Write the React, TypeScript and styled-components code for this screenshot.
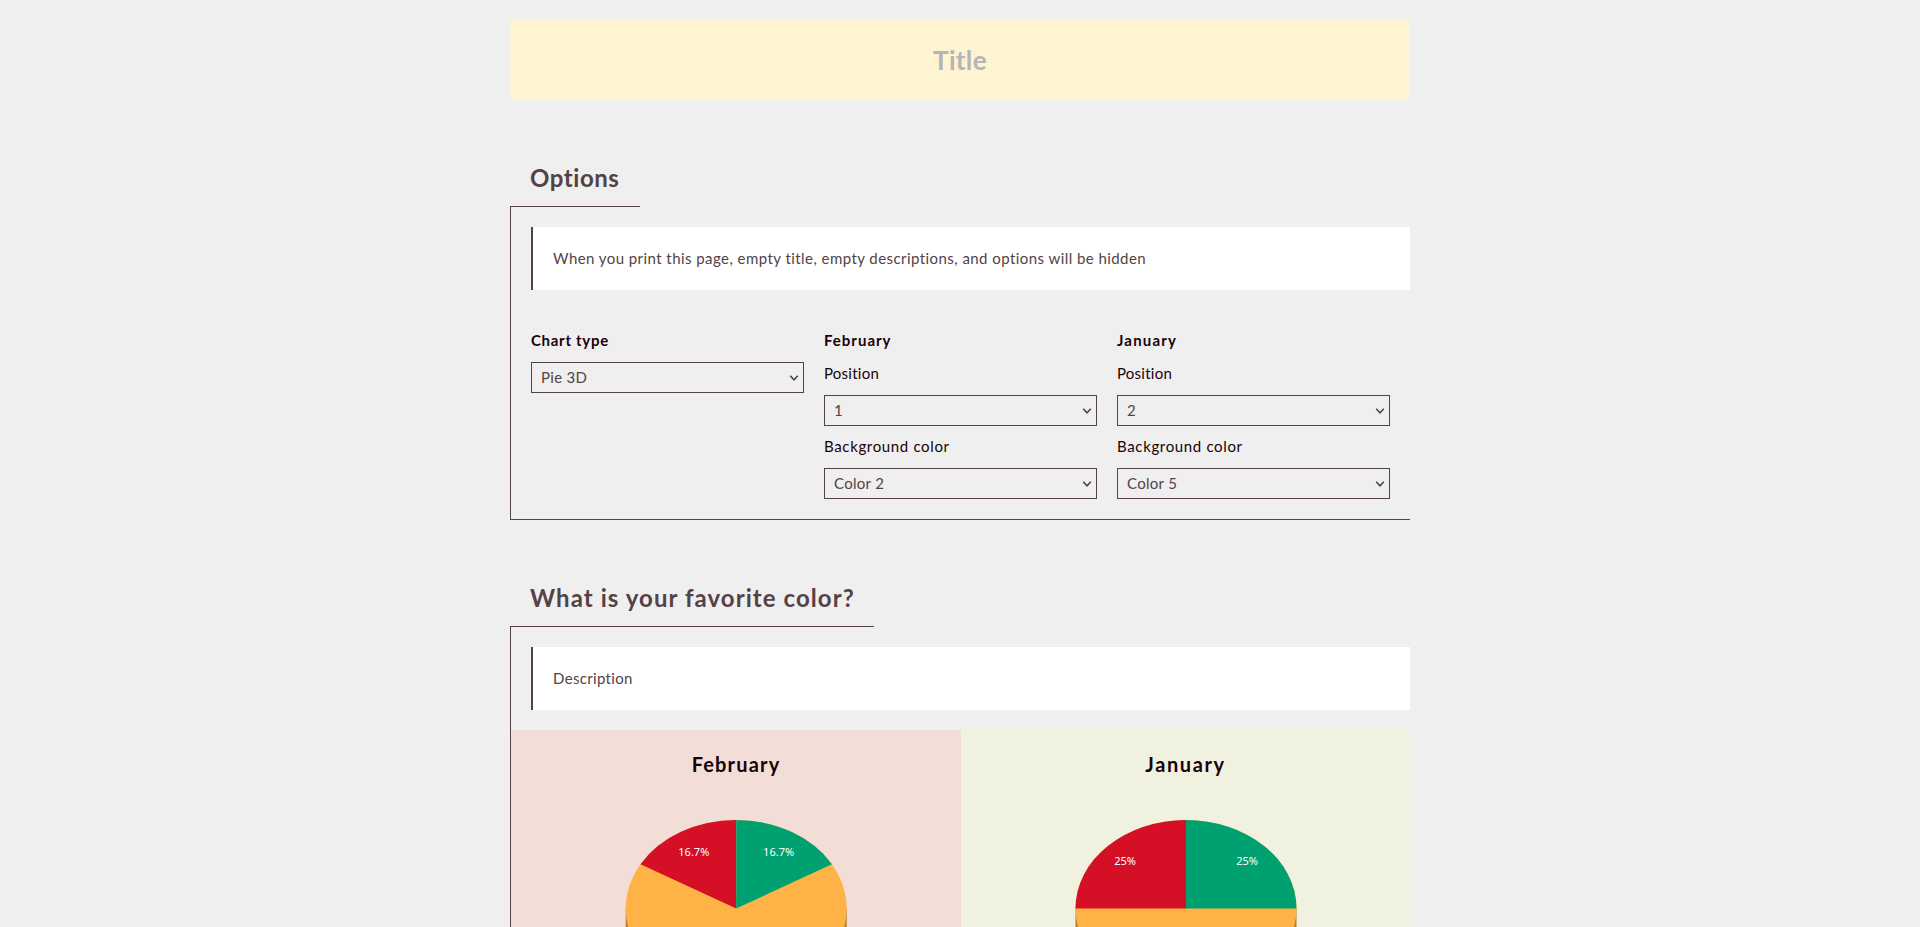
import React from 'react';
import styled, { createGlobalStyle } from 'styled-components';

const ink = '#544245';
const dark = '#190207';

const GlobalStyle = createGlobalStyle`
  * { box-sizing: border-box; }
  body {
    margin: 0;
    background: #efefef;
    color: ${dark};
    font: 15px/19px Lato, sans-serif;
  }
`;

const Page = styled.main`
  width: 900px;
  height: 100vh;
  margin: 0 auto;
  padding-top: 20px;
  overflow: hidden;
`;

const TitleInput = styled.input`
  display: block;
  width: 100%;
  height: 80px;
  padding: 0 20px;
  border: 0;
  background: #fff4d1;
  font: 700 26px/32px Lato, sans-serif;
  letter-spacing: 0.35px;
  text-align: center;
  &::placeholder { color: #b5b5b7; opacity: 1; }
`;

const Section = styled.section`
  display: flex;
  flex-direction: column;
  align-items: flex-start;
  margin-top: 58px;
`;

const Heading = styled.h2<{ $width: number; $track: number }>`
  width: ${(p) => p.$width}px;
  height: 49px;
  margin: 0;
  padding: 5px 0 0 20px;
  border-bottom: 1px solid ${ink};
  color: ${ink};
  font-size: 24px;
  line-height: 30px;
  letter-spacing: ${(p) => p.$track}px;
  white-space: nowrap;
`;

const Body = styled.div<{ $closed?: boolean }>`
  width: 100%;
  padding-top: 20px;
  border-left: 1px solid ${ink};
  border-bottom: ${(p) => (p.$closed ? `1px solid ${ink}` : '0')};
`;

const Note = styled.p<{ $track: number }>`
  height: 63px;
  margin: 0 0 0 20px;
  padding: 22px 20px 0;
  border-left: 2px solid ${ink};
  background: #fff;
  color: ${ink};
  letter-spacing: ${(p) => p.$track}px;
`;

const Controls = styled.div`
  display: grid;
  grid-template-columns: repeat(3, 273px);
  column-gap: 20px;
  padding: 41px 20px 20px;
`;

const Column = styled.div`
  display: flex;
  flex-direction: column;
`;

const GroupName = styled.strong<{ $track: number }>`
  letter-spacing: ${(p) => p.$track}px;
`;

const Field = styled.label<{ $top: number }>`
  display: flex;
  flex-direction: column;
  gap: 12px;
  margin-top: ${(p) => p.$top}px;
`;

const FieldName = styled.span<{ $track: number }>`
  letter-spacing: ${(p) => p.$track}px;
`;

const SelectBox = styled.span`
  display: grid;
  align-items: center;
  height: 31px;
  border: 1px solid ${ink};
  & > * { grid-area: 1 / 1; }
`;

const Select = styled.select`
  appearance: none;
  width: 100%;
  height: 29px;
  padding: 0 9px;
  border: 0;
  background: transparent;
  color: ${ink};
  font: 15px/19px Lato, sans-serif;
  letter-spacing: 0.3px;
`;

const Chevron = styled.svg`
  justify-self: end;
  margin-right: 4px;
  pointer-events: none;
`;

const Charts = styled.div`
  display: grid;
  grid-template-columns: 450px 449px;
  margin-top: 20px;
`;

const ChartPanel = styled.div<{ $bg: string }>`
  height: 400px;
  padding-top: 21px;
  background: ${(p) => p.$bg};
  text-align: center;
`;

const ChartTitle = styled.h3<{ $track: number }>`
  height: 27px;
  margin: 0;
  font-size: 20px;
  line-height: 26px;
  letter-spacing: ${(p) => p.$track}px;
`;

const Pie = styled.svg`
  display: block;
`;

const Percent = styled.text`
  fill: #fff;
  font: 11px 'Noto Sans', sans-serif;
  text-anchor: middle;
`;

function Dropdown({ value }: { value: string }) {
  return (
    <SelectBox>
      <Select defaultValue={value}>
        <option>{value}</option>
      </Select>
      <Chevron width="10" height="8" viewBox="0 0 10 8" fill="none" stroke={ink} strokeWidth="1.6">
        <path d="M1.2 1.7 5 5.8 8.8 1.7" />
      </Chevron>
    </SelectBox>
  );
}

const months = [
  { name: 'February', position: '1', color: 'Color 2', track: 1 },
  { name: 'January', position: '2', color: 'Color 5', track: 1.2 },
];

type PieProps = {
  cx: number;
  angle: number;
  label: string;
  offset: number;
  labelY: number;
};

const RX = 110.5;
const RY = 88.5;
const CY = 130.5;

/* Two equal slices meet at twelve o'clock; the third fills the rest. */
function Pie3D({ cx, angle, label, offset, labelY }: PieProps) {
  const rad = (angle * Math.PI) / 180;
  const dx = RX * Math.sin(rad);
  const y = CY - RY * Math.cos(rad);
  const top = CY - RY;
  return (
    <Pie width="449" height="320">
      <path
        d={`M${cx - RX} ${CY}v28a${RX} ${RY} 0 0 0 ${RX * 2} 0v-28z`}
        fill="#b37d32"
      />
      <ellipse cx={cx} cy={CY} rx={RX} ry={RY} fill="#ffb347" />
      <path d={`M${cx} ${CY}V${top}A${RX} ${RY} 0 0 0 ${cx - dx} ${y}z`} fill="#d40f26" />
      <path d={`M${cx} ${CY}V${top}A${RX} ${RY} 0 0 1 ${cx + dx} ${y}z`} fill="#00a170" />
      <Percent x={cx - offset} y={labelY}>{label}</Percent>
      <Percent x={cx + offset} y={labelY}>{label}</Percent>
    </Pie>
  );
}

export default function App() {
  return (
    <>
      <GlobalStyle />
      <Page>
        <TitleInput placeholder="Title" />

        <Section>
          <Heading $width={130} $track={0.55}>Options</Heading>
          <Body $closed>
            <Note $track={0.44}>
              When you print this page, empty title, empty descriptions, and options will be hidden
            </Note>
            <Controls>
              <Column>
                <GroupName $track={0.7}>Chart type</GroupName>
                <Field $top={12}>
                  <Dropdown value="Pie 3D" />
                </Field>
              </Column>
              {months.map((m) => (
                <Column key={m.name}>
                  <GroupName $track={m.track}>{m.name}</GroupName>
                  <Field $top={14}>
                    <FieldName $track={0.25}>Position</FieldName>
                    <Dropdown value={m.position} />
                  </Field>
                  <Field $top={11}>
                    <FieldName $track={0.65}>Background color</FieldName>
                    <Dropdown value={m.color} />
                  </Field>
                </Column>
              ))}
            </Controls>
          </Body>
        </Section>

        <Section>
          <Heading $width={364} $track={1.06}>What is your favorite color?</Heading>
          <Body>
            <Note $track={0.33}>Description</Note>
            <Charts>
              <ChartPanel $bg="#f2ded7">
                <ChartTitle $track={1.17}>February</ChartTitle>
                <Pie3D cx={225.2} angle={60} label="16.7%" offset={42.4} labelY={78} />
              </ChartPanel>
              <ChartPanel $bg="#f0f1de">
                <ChartTitle $track={1.6}>January</ChartTitle>
                <Pie3D cx={225} angle={90} label="25%" offset={61} labelY={86.5} />
              </ChartPanel>
            </Charts>
          </Body>
        </Section>
      </Page>
    </>
  );
}
